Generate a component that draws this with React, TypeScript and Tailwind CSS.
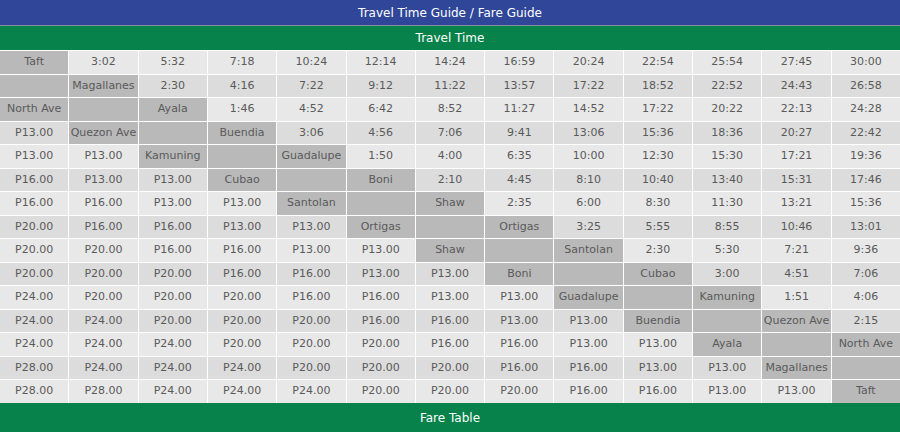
import React from "react";

const S = (t: string) => ({ t, s: true });
const rows: (string | { t: string; s: boolean })[][] = [
  [S("Taft"), "3:02", "5:32", "7:18", "10:24", "12:14", "14:24", "16:59", "20:24", "22:54", "25:54", "27:45", "30:00"],
  [S(""), S("Magallanes"), "2:30", "4:16", "7:22", "9:12", "11:22", "13:57", "17:22", "18:52", "22:52", "24:43", "26:58"],
  [S("North Ave"), S(""), S("Ayala"), "1:46", "4:52", "6:42", "8:52", "11:27", "14:52", "17:22", "20:22", "22:13", "24:28"],
  ["P13.00", S("Quezon Ave"), S(""), S("Buendia"), "3:06", "4:56", "7:06", "9:41", "13:06", "15:36", "18:36", "20:27", "22:42"],
  ["P13.00", "P13.00", S("Kamuning"), S(""), S("Guadalupe"), "1:50", "4:00", "6:35", "10:00", "12:30", "15:30", "17:21", "19:36"],
  ["P16.00", "P13.00", "P13.00", S("Cubao"), S(""), S("Boni"), "2:10", "4:45", "8:10", "10:40", "13:40", "15:31", "17:46"],
  ["P16.00", "P16.00", "P13.00", "P13.00", S("Santolan"), S(""), S("Shaw"), "2:35", "6:00", "8:30", "11:30", "13:21", "15:36"],
  ["P20.00", "P16.00", "P16.00", "P13.00", "P13.00", S("Ortigas"), S(""), S("Ortigas"), "3:25", "5:55", "8:55", "10:46", "13:01"],
  ["P20.00", "P20.00", "P16.00", "P16.00", "P13.00", "P13.00", S("Shaw"), S(""), S("Santolan"), "2:30", "5:30", "7:21", "9:36"],
  ["P20.00", "P20.00", "P20.00", "P16.00", "P16.00", "P13.00", "P13.00", S("Boni"), S(""), S("Cubao"), "3:00", "4:51", "7:06"],
  ["P24.00", "P20.00", "P20.00", "P20.00", "P16.00", "P16.00", "P13.00", "P13.00", S("Guadalupe"), S(""), S("Kamuning"), "1:51", "4:06"],
  ["P24.00", "P24.00", "P20.00", "P20.00", "P20.00", "P16.00", "P16.00", "P13.00", "P13.00", S("Buendia"), S(""), S("Quezon Ave"), "2:15"],
  ["P24.00", "P24.00", "P24.00", "P20.00", "P20.00", "P20.00", "P16.00", "P16.00", "P13.00", "P13.00", S("Ayala"), S(""), S("North Ave")],
  ["P28.00", "P24.00", "P24.00", "P24.00", "P20.00", "P20.00", "P20.00", "P16.00", "P16.00", "P13.00", "P13.00", S("Magallanes"), S("")],
  ["P28.00", "P28.00", "P24.00", "P24.00", "P24.00", "P20.00", "P20.00", "P20.00", "P16.00", "P16.00", "P13.00", "P13.00", S("Taft")],
];

export default function App() {
  return (
    <div className="w-[900px] h-[432px] overflow-hidden bg-white flex flex-col" style={{ fontFamily: '"DejaVu Sans", Verdana, sans-serif' }}>
      <div className="h-[26px] bg-[#2f4699] text-white text-[12px] flex items-center justify-center border-b border-[#8a8fa0]">
        Travel Time Guide / Fare Guide
      </div>
      <div className="h-[24px] bg-[#07824a] text-white text-[12px] flex items-center justify-center">
        Travel Time
      </div>
      <div className="h-[353px] grid grid-cols-13 grid-rows-[repeat(15,minmax(0,1fr))] gap-px pt-px bg-white text-[11px] text-[#5a5a5a]">
        {rows.map((r, i) =>
          r.map((c, j) => {
            const isS = typeof c !== "string";
            const text = typeof c === "string" ? c : c.t;
            const bg = isS ? "bg-[#b9b9b9]" : i % 2 === 0 ? "bg-[#e8e8e8]" : "bg-[#dcdcdc]";
            return (
              <div key={`${i}-${j}`} className={`${bg} flex items-center justify-center whitespace-nowrap`}>
                {text}
              </div>
            );
          })
        )}
      </div>
      <div className="flex-1 bg-[#07824a] text-white text-[12px] flex items-center justify-center">
        Fare Table
      </div>
    </div>
  );
}
